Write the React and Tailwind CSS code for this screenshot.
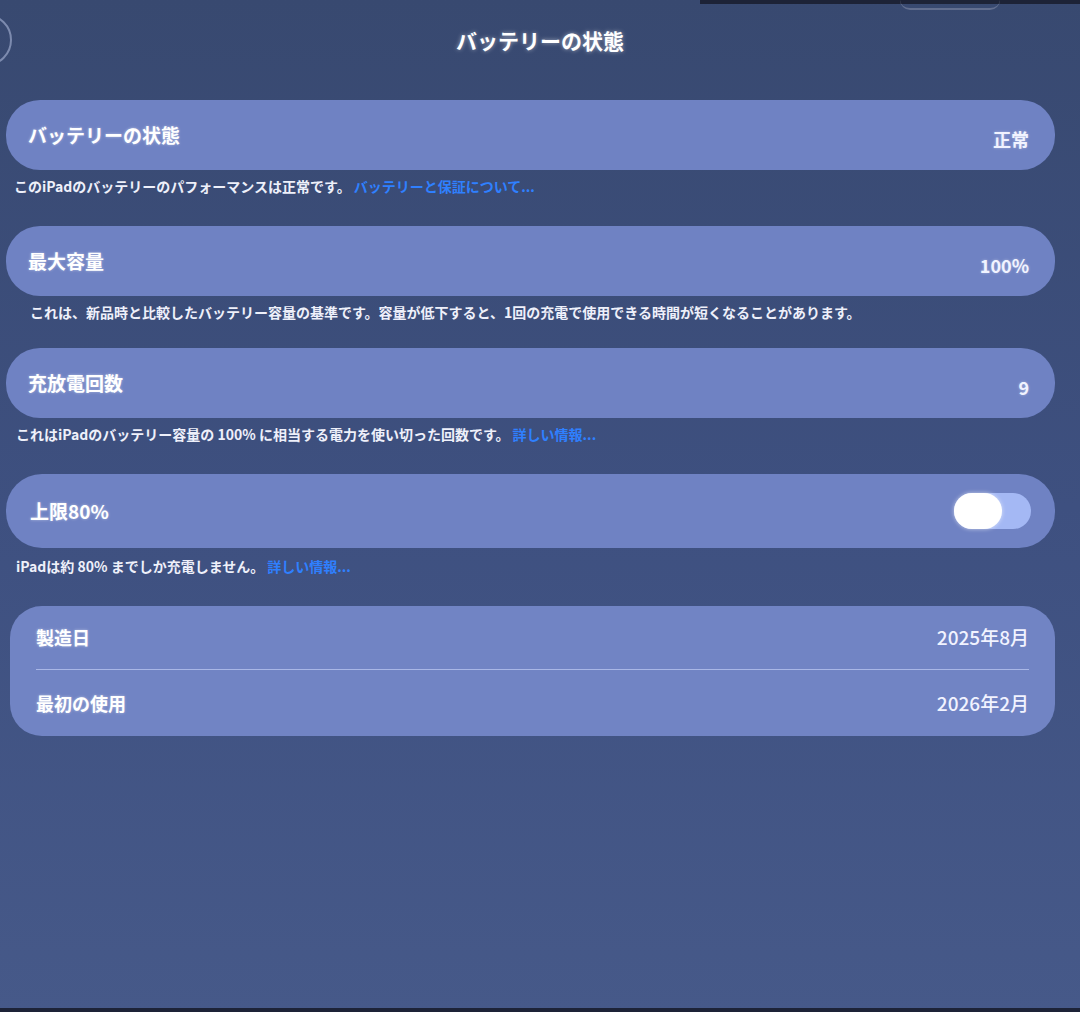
import React from 'react';

const font = { fontFamily: '"Noto Sans CJK JP", "Noto Sans", sans-serif' };

const Card = ({ label, value, children }) => (
  <div className="h-[70px] rounded-[34px] bg-[#6f82c3] flex items-center justify-between pl-[22px] pr-[26px]">
    <span className="text-[19px] font-bold text-white [text-shadow:0_0_3px_rgba(255,255,255,0.45)]">{label}</span>
    {value && <span className="text-[18px] font-semibold text-[#f1f3ff] pt-[8px] [text-shadow:0_0_3px_rgba(255,255,255,0.4)]">{value}</span>}
    {children}
  </div>
);

const Footer = ({ text, link, className = '' }) => (
  <p className={`mt-[6px] text-[14px] font-bold leading-[20px] text-[#eef0fa] ${className}`}>
    {text}
    {link && <span className="text-[#2f80ff] ml-[3px]">{link}</span>}
  </p>
);

const App = () => {
  return (
    <div
      style={font}
      className="relative w-[1080px] h-[1012px] overflow-hidden bg-gradient-to-b from-[#384970] via-[#3e5080] to-[#465989]"
    >
      {/* bezel edge at top */}
      <div className="absolute top-0 right-0 h-[4px] w-[380px] bg-[#1d2337]" />
      <div className="absolute top-[-10px] right-[80px] h-[20px] w-[100px] rounded-full border-b-2 border-[#8b93ad]/50" />
      {/* back button edge */}
      <div className="absolute top-[14px] left-[-40px] h-[52px] w-[52px] rounded-full border-2 border-[#9aa6c9]/70" />

      <div className="pt-[24px] text-center">
        <h1 className="text-[21px] font-bold text-white leading-[32px] [text-shadow:0_0_4px_rgba(255,255,255,0.5)]">
          バッテリーの状態
        </h1>
      </div>

      <div className="mt-[44px] pl-[6px] pr-[25px]">
        <Card label="バッテリーの状態" value="正常" />
        <Footer
          className="pl-[8px]"
          text="このiPadのバッテリーのパフォーマンスは正常です。"
          link="バッテリーと保証について..."
        />

        <div className="mt-[30px]">
          <Card label="最大容量" value="100%" />
          <Footer
            className="pl-[24px]"
            text="これは、新品時と比較したバッテリー容量の基準です。容量が低下すると、1回の充電で使用できる時間が短くなることがあります。"
          />
        </div>

        <div className="mt-[26px]">
          <Card label="充放電回数" value="9" />
          <Footer
            className="pl-[10px]"
            text="これはiPadのバッテリー容量の 100% に相当する電力を使い切った回数です。"
            link="詳しい情報..."
          />
        </div>

        <div className="mt-[30px]">
          <div className="h-[74px] rounded-[36px] bg-[#6f82c3] flex items-center justify-between pl-[24px] pr-[24px]">
            <span className="text-[19px] font-bold text-white [text-shadow:0_0_3px_rgba(255,255,255,0.45)]">上限80%</span>
            <div className="relative h-[36px] w-[77px] rounded-full bg-[#a4b8f4]">
              <div className="absolute left-0 top-0 h-[36px] w-[48px] rounded-full bg-white shadow-[0_0_4px_rgba(255,255,255,0.6)]" />
            </div>
          </div>
          <Footer className="pl-[10px] mt-[8px]" text="iPadは約 80% までしか充電しません。" link="詳しい情報..." />
        </div>

        <div className="mt-[30px] ml-[4px] rounded-[32px] bg-[#7184c4] px-[26px]">
          <div className="h-[64px] flex items-center justify-between border-b border-[#a9b7e6]">
            <span className="text-[18px] font-bold text-white [text-shadow:0_0_3px_rgba(255,255,255,0.45)]">製造日</span>
            <span className="text-[19px] font-medium text-[#f1f3ff]">2025年8月</span>
          </div>
          <div className="h-[66px] flex items-center justify-between">
            <span className="text-[18px] font-bold text-white [text-shadow:0_0_3px_rgba(255,255,255,0.45)]">最初の使用</span>
            <span className="text-[19px] font-medium text-[#f1f3ff]">2026年2月</span>
          </div>
        </div>
      </div>

      <div className="absolute bottom-0 left-0 h-[4px] w-full bg-[#1d2337]" />
    </div>
  );
};

export default App;
